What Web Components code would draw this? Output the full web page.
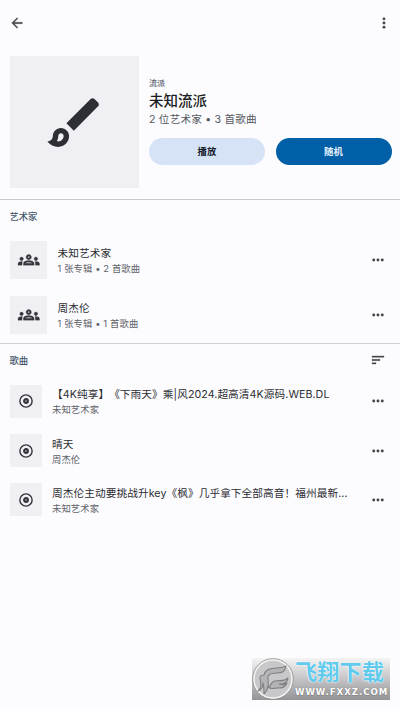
<!DOCTYPE html>
<html lang="zh-CN"><head><meta charset="utf-8"><title>未知流派</title>
<style>html,body{margin:0;height:711px;overflow:hidden;background:#fcfcff}body{font-family:Inter,"Noto Sans CJK SC",sans-serif;text-spacing-trim:space-all}</style></head><body>
<genre-page></genre-page>
<script>
const icons={
back:['0 0 24 24','<path d="M20 11H7.83l5.59-5.59L12 4l-8 8 8 8 1.41-1.41L7.83 13H20z" stroke="currentColor" stroke-width=".5"/>'],
more:['0 0 24 24','<circle cx="12" cy="5.8" r="2.2"/><circle cx="12" cy="12" r="2.2"/><circle cx="12" cy="18.2" r="2.2"/>'],
dots:['0 0 24 24','<circle cx="5.6" cy="12" r="2.2"/><circle cx="12" cy="12" r="2.2"/><circle cx="18.4" cy="12" r="2.2"/>'],
sort:['0 0 24 24','<path d="M3 18h6v-2H3zM3 6v2h18V6zm0 7h12v-2H3z" stroke="currentColor" stroke-width=".5"/>'],
brush:['0 0 24 24','<path d="M7 16c.55 0 1 .45 1 1 0 1.1-.9 2-2 2-.17 0-.33-.02-.5-.05.31-.55.5-1.21.5-1.95 0-.55.45-1 1-1M18.67 3c-.26 0-.51.1-.71.29L9 12.25 11.75 15l8.96-8.96c.39-.39.39-1.02 0-1.41l-1.34-1.34c-.2-.2-.45-.29-.7-.29zM7 14c-1.66 0-3 1.34-3 3 0 1.31-1.16 2-2 2 .92 1.22 2.49 2 4 2 2.21 0 4-1.79 4-4 0-1.66-1.34-3-3-3z"/>'],
groups:['0 0 24 24','<path stroke="currentColor" stroke-width=".3" d="M4 13c1.1 0 2-.9 2-2s-.9-2-2-2-2 .9-2 2 .9 2 2 2zm1.13 1.1c-.37-.06-.74-.1-1.13-.1-.99 0-1.93.21-2.78.58C.48 14.9 0 15.62 0 16.43V18h4.5v-1.61c0-.83.23-1.61.63-2.29zM20 13c1.1 0 2-.9 2-2s-.9-2-2-2-2 .9-2 2 .9 2 2 2zm4 3.43c0-.81-.48-1.53-1.22-1.85-.85-.37-1.79-.58-2.78-.58-.39 0-.76.04-1.13.1.4.68.63 1.46.63 2.29V18H24v-1.57zM16.24 13.65c-1.17-.52-2.61-.9-4.24-.9s-3.07.39-4.24.9C6.68 14.13 6 15.21 6 16.39V18h12v-1.61c0-1.18-.68-2.26-1.76-2.74zM8.07 16c.09-.23.13-.39.91-.69.97-.38 1.99-.56 3.02-.56s2.05.18 3.02.56c.77.3.81.46.91.69H8.07zM12 8c.55 0 1 .45 1 1s-.45 1-1 1-1-.45-1-1 .45-1 1-1m0-2c-1.66 0-3 1.34-3 3s1.34 3 3 3 3-1.34 3-3-1.34-3-3-3z"/>'],
disc:['0 0 24 24','<g fill="none" stroke="currentColor"><circle cx="12" cy="12" r="9.2" stroke-width="2.1"/><circle cx="12" cy="12" r="2.7" stroke-width="3.4"/></g>']};
const define=(name,html,setup)=>customElements.define(name,class extends HTMLElement{
 connectedCallback(){if(this.shadowRoot)return;this.attachShadow({mode:'open'}).innerHTML=html;if(setup)setup(this,this.shadowRoot)}});
define('ui-icon','<style>:host{display:block;flex:none;width:var(--s,17px);height:var(--s,17px);color:#45464c}svg{display:block;width:100%;height:100%;fill:currentColor;overflow:visible}</style><svg></svg>',(e,r)=>{
 const [v,p]=icons[e.getAttribute('name')],s=r.querySelector('svg');s.setAttribute('viewBox',v);s.innerHTML=p});
define('cover-tile','<style>:host{display:grid;place-items:center;flex:none;background:#f0f0f4}</style><slot></slot>');
define('top-bar',`<style>:host{display:flex;justify-content:space-between;height:46px;box-sizing:border-box;padding:15px 8.5px 0 9.3px}</style><ui-icon style="--s:16px" name="back"></ui-icon><ui-icon style="--s:16px" name="more"></ui-icon>`);
define('pill-button',`<style>:host{display:grid;place-items:center;width:116px;height:27px;border-radius:14px;background:#d6e3f7;color:#16202e;font-size:9.4px;font-weight:700}:host([primary]){background:#005fa6;color:#e6f2ff}</style><slot></slot>`);
define('genre-header',`<style>:host{display:flex;height:154px;box-sizing:border-box;border-bottom:1px solid #c9cacf;padding:10px 0 0 9.5px;gap:10.5px}
cover-tile{width:129px;height:132px}cover-tile ui-icon{--s:65px;color:#2e2f34}
.t{padding-top:20px}.t>div{white-space:nowrap}.k{font-size:8px;line-height:14px;color:#61646f;font-weight:500}.h{font-size:14.5px;line-height:22px;font-weight:500;color:#1b1c20}.s{font-size:10.6px;line-height:16px;color:#55575d;letter-spacing:.2px}.b{display:flex;gap:10.5px;margin-top:9.5px}</style>
<cover-tile><ui-icon name="brush"></ui-icon></cover-tile><div class="t"><div class="k">流派</div><div class="h">未知流派</div><div class="s">2 位艺术家 • 3 首歌曲</div><div class="b"><pill-button>播放</pill-button><pill-button primary>随机</pill-button></div></div>`);
define('section-title',`<style>:host{display:flex;justify-content:space-between;align-items:center;height:32.5px;padding:0 14.5px 0 9.5px;font-size:9.3px;font-weight:500;color:#435468}</style><slot></slot><slot name="action"></slot>`);
define('media-row',`<style>:host{display:flex;align-items:center;height:49.4px;padding:0 14.2px 0 9.5px;gap:10.5px}
cover-tile{width:32px;height:33px}cover-tile ui-icon{--s:16px;color:#34353a}:host([artist]){height:55px}:host([artist]) cover-tile{width:37.5px;height:38px}:host([artist]) cover-tile ui-icon{--s:21.5px}
.x{flex:1;min-width:0;white-space:nowrap;padding-top:2.4px}.n{font-size:10.7px;line-height:16px;color:#2c2d32;width:299px;overflow:hidden;text-overflow:ellipsis;letter-spacing:.05px}.s{font-size:9.3px;line-height:14px;color:#606268;letter-spacing:.14px}.d{--s:16px}</style>
<cover-tile><ui-icon name="disc"></ui-icon></cover-tile><div class="x"><div class="n"><slot></slot></div><div class="s"><slot name="sub"></slot></div></div><ui-icon class="d" name="dots"></ui-icon>`,(e,r)=>{
 if(e.hasAttribute('artist')){const i=document.createElement('ui-icon');i.setAttribute('name','groups');r.querySelector('cover-tile').replaceChildren(i)}});
define('site-mark',`<style>:host{position:absolute;left:252px;top:658px;width:138px;height:42px;background:linear-gradient(#f4f4f5,#c9c9cb 45%,#949496);display:flex;align-items:center;overflow:hidden}
svg{width:43px;height:42px;flex:none}div{white-space:nowrap}.c{font-size:22px;line-height:27px;font-weight:700;color:#60cbed;text-shadow:0 0 1px #fff,0 0 2px #fff;letter-spacing:.3px}.u{font:700 8.6px/13px "DejaVu Sans",sans-serif;color:#fff;text-shadow:0 0 1px #777,0 1px 1px #888;letter-spacing:.95px}</style>
<svg viewBox="0 0 43 42"><circle cx="21" cy="21" r="19.3" fill="#c8c8ca" stroke="#f5f5f5" stroke-width="2"/><circle cx="21" cy="21" r="20.3" fill="none" stroke="#898989" stroke-width=".8"/><g fill="#b4b4b6" stroke="#808082" stroke-width="1.1" stroke-linejoin="round"><path d="M6 33c4-3 3-8 2-13 0-2 2-3 4-3 1-6 8-7 13-7 4 0 7-1 9-2-1 6-4 7-9 7-7 0-10 2-9 7 1 5 0 10-4 14 0-5 0-8-1-11 0 4-2 7-5 8z"/><path d="M16 29c4 0 2-6 7-6 5-1 9 1 13-3-1 6-5 6-9 6 3 1 6 1 8-1-2 5-5 5-10 5-4 0-5 2-9-1z"/></g></svg><div><div class="c">飞翔下载</div><div class="u">WWW.FXXZ.COM</div></div>`);
define('genre-page',`<style>:host{display:block;position:relative;width:400px;height:711px;background:#fcfcff}.a{height:144px;box-sizing:border-box;border-bottom:1px solid #d0d1d5}</style>
<top-bar></top-bar><genre-header></genre-header><div class="a"><section-title>艺术家</section-title>
<media-row artist>未知艺术家<span slot="sub">1 张专辑 • 2 首歌曲</span></media-row><media-row artist>周杰伦<span slot="sub">1 张专辑 • 1 首歌曲</span></media-row></div>
<section-title>歌曲<ui-icon slot="action" name="sort" style="--s:16px"></ui-icon></section-title>
<media-row>【4K纯享】《下雨天》乘|风2024.超高清4K源码.WEB.DL<span slot="sub">未知艺术家</span></media-row>
<media-row>晴天<span slot="sub">周杰伦</span></media-row>
<media-row>周杰伦主动要挑战升key《枫》几乎拿下全部高音！福州最新演唱会现场<span slot="sub">未知艺术家</span></media-row><site-mark></site-mark>`);
</script></body></html>
